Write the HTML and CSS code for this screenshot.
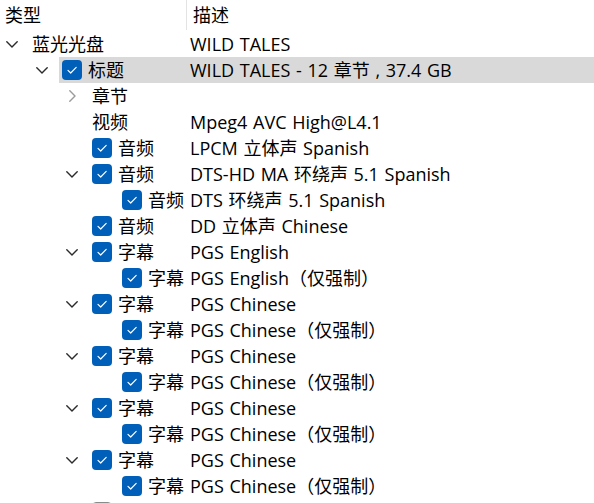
FILE: index.html
```html
<!DOCTYPE html>
<html lang="zh-CN">
<head>
<meta charset="utf-8">
<title>Tree</title>
<link rel="stylesheet" href="styles.css">
</head>
<body>
<div class="tree">
  <div class="header">
    <div class="hcol1">类型</div>
    <div class="hcol2">描述</div>
  </div>

  <div class="row l0">
    <span class="indent"></span>
    <span class="twisty"><svg class="down" width="12" height="7" viewBox="0 0 12 7"><path d="M0.8 0.8 L6 6 L11.2 0.8"/></svg></span>
    <div class="main"><div class="name"><span class="label">蓝光光盘</span></div><div class="desc">WILD TALES</div></div>
  </div>

  <div class="row l1 sel">
    <span class="indent"></span>
    <span class="twisty"><svg class="down" width="12" height="7" viewBox="0 0 12 7"><path d="M0.8 0.8 L6 6 L11.2 0.8"/></svg></span>
    <div class="main"><div class="name"><span class="cb on"><svg width="20" height="20" viewBox="0 0 20 20"><path d="M6 10.3 L8.7 13 L14.2 7.4"/></svg></span><span class="label">标题</span></div><div class="desc">WILD TALES - 12 章节 , 37.4 GB</div></div>
  </div>

  <div class="row l2">
    <span class="indent"></span>
    <span class="twisty"><svg class="right" width="7" height="12" viewBox="0 0 7 12"><path d="M0.8 0.8 L6 6 L0.8 11.2"/></svg></span>
    <div class="main"><div class="name"><span class="label">章节</span></div><div class="desc"></div></div>
  </div>

  <div class="row l2">
    <span class="indent"></span>
    <span class="twisty"></span>
    <div class="main"><div class="name"><span class="label">视频</span></div><div class="desc">Mpeg4 AVC High@L4.1</div></div>
  </div>

  <div class="row l2">
    <span class="indent"></span>
    <span class="twisty"></span>
    <div class="main"><div class="name"><span class="cb on"><svg width="20" height="20" viewBox="0 0 20 20"><path d="M6 10.3 L8.7 13 L14.2 7.4"/></svg></span><span class="label">音频</span></div><div class="desc">LPCM 立体声 Spanish</div></div>
  </div>

  <div class="row l2">
    <span class="indent"></span>
    <span class="twisty"><svg class="down" width="12" height="7" viewBox="0 0 12 7"><path d="M0.8 0.8 L6 6 L11.2 0.8"/></svg></span>
    <div class="main"><div class="name"><span class="cb on"><svg width="20" height="20" viewBox="0 0 20 20"><path d="M6 10.3 L8.7 13 L14.2 7.4"/></svg></span><span class="label">音频</span></div><div class="desc">DTS-HD MA 环绕声 5.1 Spanish</div></div>
  </div>

  <div class="row l3">
    <span class="indent"></span>
    <span class="twisty"></span>
    <div class="main"><div class="name"><span class="cb on"><svg width="20" height="20" viewBox="0 0 20 20"><path d="M6 10.3 L8.7 13 L14.2 7.4"/></svg></span><span class="label">音频</span></div><div class="desc">DTS 环绕声 5.1 Spanish</div></div>
  </div>

  <div class="row l2">
    <span class="indent"></span>
    <span class="twisty"></span>
    <div class="main"><div class="name"><span class="cb on"><svg width="20" height="20" viewBox="0 0 20 20"><path d="M6 10.3 L8.7 13 L14.2 7.4"/></svg></span><span class="label">音频</span></div><div class="desc">DD 立体声 Chinese</div></div>
  </div>

  <div class="row l2">
    <span class="indent"></span>
    <span class="twisty"><svg class="down" width="12" height="7" viewBox="0 0 12 7"><path d="M0.8 0.8 L6 6 L11.2 0.8"/></svg></span>
    <div class="main"><div class="name"><span class="cb on"><svg width="20" height="20" viewBox="0 0 20 20"><path d="M6 10.3 L8.7 13 L14.2 7.4"/></svg></span><span class="label">字幕</span></div><div class="desc">PGS English</div></div>
  </div>

  <div class="row l3">
    <span class="indent"></span>
    <span class="twisty"></span>
    <div class="main"><div class="name"><span class="cb on"><svg width="20" height="20" viewBox="0 0 20 20"><path d="M6 10.3 L8.7 13 L14.2 7.4"/></svg></span><span class="label">字幕</span></div><div class="desc">PGS English（仅强制）</div></div>
  </div>

  <div class="row l2">
    <span class="indent"></span>
    <span class="twisty"><svg class="down" width="12" height="7" viewBox="0 0 12 7"><path d="M0.8 0.8 L6 6 L11.2 0.8"/></svg></span>
    <div class="main"><div class="name"><span class="cb on"><svg width="20" height="20" viewBox="0 0 20 20"><path d="M6 10.3 L8.7 13 L14.2 7.4"/></svg></span><span class="label">字幕</span></div><div class="desc">PGS Chinese</div></div>
  </div>

  <div class="row l3">
    <span class="indent"></span>
    <span class="twisty"></span>
    <div class="main"><div class="name"><span class="cb on"><svg width="20" height="20" viewBox="0 0 20 20"><path d="M6 10.3 L8.7 13 L14.2 7.4"/></svg></span><span class="label">字幕</span></div><div class="desc">PGS Chinese（仅强制）</div></div>
  </div>

  <div class="row l2">
    <span class="indent"></span>
    <span class="twisty"><svg class="down" width="12" height="7" viewBox="0 0 12 7"><path d="M0.8 0.8 L6 6 L11.2 0.8"/></svg></span>
    <div class="main"><div class="name"><span class="cb on"><svg width="20" height="20" viewBox="0 0 20 20"><path d="M6 10.3 L8.7 13 L14.2 7.4"/></svg></span><span class="label">字幕</span></div><div class="desc">PGS Chinese</div></div>
  </div>

  <div class="row l3">
    <span class="indent"></span>
    <span class="twisty"></span>
    <div class="main"><div class="name"><span class="cb on"><svg width="20" height="20" viewBox="0 0 20 20"><path d="M6 10.3 L8.7 13 L14.2 7.4"/></svg></span><span class="label">字幕</span></div><div class="desc">PGS Chinese（仅强制）</div></div>
  </div>

  <div class="row l2">
    <span class="indent"></span>
    <span class="twisty"><svg class="down" width="12" height="7" viewBox="0 0 12 7"><path d="M0.8 0.8 L6 6 L11.2 0.8"/></svg></span>
    <div class="main"><div class="name"><span class="cb on"><svg width="20" height="20" viewBox="0 0 20 20"><path d="M6 10.3 L8.7 13 L14.2 7.4"/></svg></span><span class="label">字幕</span></div><div class="desc">PGS Chinese</div></div>
  </div>

  <div class="row l3">
    <span class="indent"></span>
    <span class="twisty"></span>
    <div class="main"><div class="name"><span class="cb on"><svg width="20" height="20" viewBox="0 0 20 20"><path d="M6 10.3 L8.7 13 L14.2 7.4"/></svg></span><span class="label">字幕</span></div><div class="desc">PGS Chinese（仅强制）</div></div>
  </div>

  <div class="row l2">
    <span class="indent"></span>
    <span class="twisty"><svg class="down" width="12" height="7" viewBox="0 0 12 7"><path d="M0.8 0.8 L6 6 L11.2 0.8"/></svg></span>
    <div class="main"><div class="name"><span class="cb on"><svg width="20" height="20" viewBox="0 0 20 20"><path d="M6 10.3 L8.7 13 L14.2 7.4"/></svg></span><span class="label">字幕</span></div><div class="desc">PGS Chinese</div></div>
  </div>

  <div class="row l3">
    <span class="indent"></span>
    <span class="twisty"></span>
    <div class="main"><div class="name"><span class="cb on"><svg width="20" height="20" viewBox="0 0 20 20"><path d="M6 10.3 L8.7 13 L14.2 7.4"/></svg></span><span class="label">字幕</span></div><div class="desc">PGS Chinese（仅强制）</div></div>
  </div>

  <div class="row l2">
    <span class="indent"></span>
    <span class="twisty"></span>
    <div class="main"><div class="name"><span class="cb off"></span></div></div>
  </div>
</div>
</body>
</html>
```

FILE: styles.css
```css
html, body {
  margin: 0;
  padding: 0;
  background: #ffffff;
  overflow: hidden;
}

.tree {
  font-family: "Open Sans", "Noto Sans CJK SC", sans-serif;
  font-size: 18px;
  color: #000000;
  width: 594px;
  height: 503px;
  overflow: hidden;
}

.header {
  display: flex;
  height: 31px;
  line-height: 30px;
}

.hcol1 {
  width: 181px;
  padding-left: 5px;
  border-right: 1px solid #e3e3e3;
  height: 30px;
}

.hcol2 {
  padding-left: 6px;
}

.row {
  display: flex;
  height: 26px;
  line-height: 26px;
  white-space: nowrap;
}

.indent {
  flex: none;
  width: 0;
}

.twisty {
  flex: none;
  width: 29px;
  display: flex;
  align-items: center;
  padding-left: 6px;
  box-sizing: border-box;
}

.twisty svg {
  fill: none;
  stroke-linecap: round;
  stroke-linejoin: round;
}

.twisty .down {
  stroke: #2b2b2b;
  stroke-width: 1.4;
}

.twisty .right {
  stroke: #9b9b9b;
  stroke-width: 1.4;
  margin-left: 3px;
}

.main {
  flex: 1;
  display: flex;
  padding-left: 3px;
}

.sel .main {
  background: #d9d9d9;
}

.name {
  flex: none;
  display: flex;
  align-items: center;
}

.desc {
  flex: none;
  word-spacing: 1px;
}

.cb {
  flex: none;
  width: 20px;
  height: 20px;
  border-radius: 4px;
  margin-right: 6px;
  box-sizing: border-box;
  display: flex;
}

.cb.on {
  background: #005fb8;
}

.cb.on svg {
  fill: none;
  stroke: #ffffff;
  stroke-width: 1.2;
  stroke-linecap: round;
  stroke-linejoin: round;
}

.cb.off {
  background: #f6f6f6;
  border: 1px solid #8a8a8a;
}

.l0 .indent { width: 0; }
.l1 .indent { width: 30px; }
.l2 .indent { width: 60px; }
.l3 .indent { width: 90px; }

.l0 .name { width: 158px; }
.l1 .name { width: 128px; }
.l2 .name { width: 98px; }
.l3 .name { width: 68px; }
```
